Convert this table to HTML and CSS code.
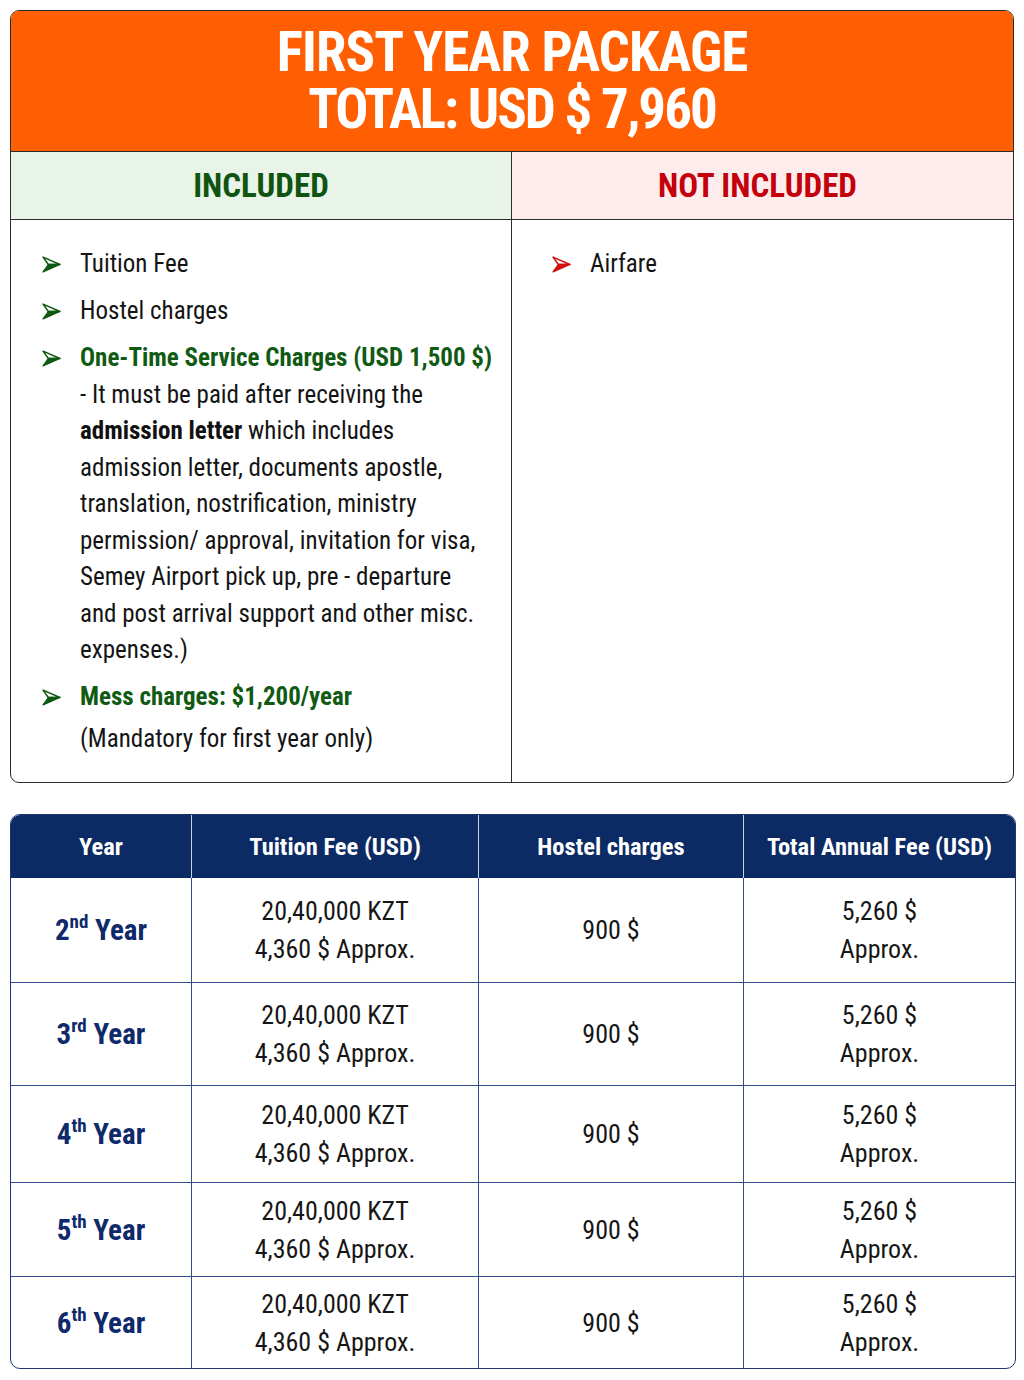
FILE: index.html
```html
<!DOCTYPE html>
<html lang="en">
<head>
<meta charset="utf-8">
<title>First Year Package</title>
<link rel="stylesheet" href="styles.css">
</head>
<body>
<div class="page">
  <section class="package">
    <header class="package-head">
      <h1>FIRST YEAR PACKAGE</h1>
      <h2>TOTAL: USD $ 7,960</h2>
    </header>
    <div class="cols">
      <div class="col-head inc">INCLUDED</div>
      <div class="col-head exc">NOT INCLUDED</div>
      <ul class="list inc-list">
        <li><svg class="arrow green" viewBox="0 0 18 16"><path d="M1 1 L17 8 L6 8 Z" fill="none" stroke="currentColor" stroke-width="1.4" stroke-linejoin="round"/><path d="M6 8 L17 8 L1 15 Z" fill="currentColor" stroke="currentColor" stroke-width="1.2" stroke-linejoin="round"/></svg><div class="txt">Tuition Fee</div></li>
        <li><svg class="arrow green" viewBox="0 0 18 16"><path d="M1 1 L17 8 L6 8 Z" fill="none" stroke="currentColor" stroke-width="1.4" stroke-linejoin="round"/><path d="M6 8 L17 8 L1 15 Z" fill="currentColor" stroke="currentColor" stroke-width="1.2" stroke-linejoin="round"/></svg><div class="txt">Hostel charges</div></li>
        <li><svg class="arrow green" viewBox="0 0 18 16"><path d="M1 1 L17 8 L6 8 Z" fill="none" stroke="currentColor" stroke-width="1.4" stroke-linejoin="round"/><path d="M6 8 L17 8 L1 15 Z" fill="currentColor" stroke="currentColor" stroke-width="1.2" stroke-linejoin="round"/></svg><div class="txt"><span class="hl">One-Time Service Charges (USD 1,500 $)</span><br>- It must be paid after receiving the<br><b>admission letter</b> which includes<br>admission letter, documents apostle,<br>translation, nostrification, ministry<br>permission/ approval, invitation for visa,<br>Semey Airport pick up, pre - departure<br>and post arrival support and other misc.<br>expenses.)</div></li>
        <li><svg class="arrow green" viewBox="0 0 18 16"><path d="M1 1 L17 8 L6 8 Z" fill="none" stroke="currentColor" stroke-width="1.4" stroke-linejoin="round"/><path d="M6 8 L17 8 L1 15 Z" fill="currentColor" stroke="currentColor" stroke-width="1.2" stroke-linejoin="round"/></svg><div class="txt"><span class="hl">Mess charges: $1,200/year</span><span class="note">(Mandatory for first year only)</span></div></li>
      </ul>
      <ul class="list exc-list">
        <li><svg class="arrow red" viewBox="0 0 18 16"><path d="M1 1 L17 8 L6 8 Z" fill="none" stroke="currentColor" stroke-width="1.4" stroke-linejoin="round"/><path d="M6 8 L17 8 L1 15 Z" fill="currentColor" stroke="currentColor" stroke-width="1.2" stroke-linejoin="round"/></svg><div class="txt">Airfare</div></li>
      </ul>
    </div>
  </section>

  <table class="fees">
    <colgroup>
      <col class="c1"><col class="c2"><col class="c3"><col class="c4">
    </colgroup>
    <thead>
      <tr><th>Year</th><th>Tuition Fee (USD)</th><th>Hostel charges</th><th>Total Annual Fee (USD)</th></tr>
    </thead>
    <tbody>
      <tr class="r1"><td class="yr">2<sup>nd</sup> Year</td><td>20,40,000 KZT<br>4,360 $ Approx.</td><td>900 $</td><td>5,260 $<br>Approx.</td></tr>
      <tr class="r2"><td class="yr">3<sup>rd</sup> Year</td><td>20,40,000 KZT<br>4,360 $ Approx.</td><td>900 $</td><td>5,260 $<br>Approx.</td></tr>
      <tr class="r3"><td class="yr">4<sup>th</sup> Year</td><td>20,40,000 KZT<br>4,360 $ Approx.</td><td>900 $</td><td>5,260 $<br>Approx.</td></tr>
      <tr class="r4"><td class="yr">5<sup>th</sup> Year</td><td>20,40,000 KZT<br>4,360 $ Approx.</td><td>900 $</td><td>5,260 $<br>Approx.</td></tr>
      <tr class="r5"><td class="yr">6<sup>th</sup> Year</td><td>20,40,000 KZT<br>4,360 $ Approx.</td><td>900 $</td><td>5,260 $<br>Approx.</td></tr>
    </tbody>
  </table>
</div>
</body>
</html>
```

FILE: styles.css
```css
* { box-sizing: border-box; }
html, body { margin: 0; padding: 0; background: #ffffff; }
body {
  font-family: "Roboto Condensed", "Liberation Sans Narrow", "Roboto", sans-serif;
  font-stretch: condensed;
  color: #141414;
  width: 1024px;
}
.page { padding: 10px 10px 0 10px; }

.package {
  border: 1.5px solid #2b2b2b;
  border-radius: 9px;
  overflow: hidden;
  background: #fff;
}
.package-head {
  background: #ff5e02;
  color: #fff;
  text-align: center;
  height: 140px;
  padding-top: 13px;
}
.package-head h1, .package-head h2 {
  margin: 0;
  font-weight: 700;
  font-size: 55px;
  line-height: 57px;
}
.package-head h1 { letter-spacing: -0.9px; }
.package-head h2 { letter-spacing: -2px; }
.cols {
  display: grid;
  grid-template-columns: 501px 1fr;
  grid-template-rows: 68px 562px;
  border-top: 1.5px solid #2b2b2b;
}
.col-head {
  display: flex;
  align-items: center;
  justify-content: center;
  font-weight: 700;
  font-size: 33px;
  border-bottom: 1.5px solid #2b2b2b;
}
.col-head.inc { background: #e7f4e7; color: #115411; border-right: 1.5px solid #2b2b2b; }
.col-head.exc { background: #fdeceb; color: #c4000c; padding-right: 10px; }

.list {
  list-style: none;
  margin: 0;
  font-size: 25px;
  line-height: 36.5px;
}
.inc-list { padding: 26px 0 0 31px; border-right: 1.5px solid #2b2b2b; }
.exc-list { padding: 26px 20px 0 40px; }
.list li {
  display: flex;
  align-items: flex-start;
  margin-bottom: 10.5px;
}
.arrow {
  width: 19px;
  height: 17px;
  flex: 0 0 19px;
  margin-top: 10px;
  margin-right: 19px;
}
.arrow.green { color: #0f5a12; }
.arrow.red { color: #d10f0f; }
.txt { flex: 1; white-space: nowrap; }
.hl { color: #115a14; font-weight: 700; }
.txt b { font-weight: 700; color: #111; }
.note { display: block; margin-top: 5px; }

.fees {
  margin-top: 31px;
  width: 1004px;
  border-collapse: separate;
  border-spacing: 0;
  border: 1.5px solid #1d3570;
  border-radius: 10px;
  overflow: hidden;
  table-layout: fixed;
  text-align: center;
}
.c1 { width: 181px; }
.c2 { width: 287px; }
.c3 { width: 265px; }
.c4 { width: 271px; }
.fees th {
  background: #0c2a64;
  color: #fff;
  font-weight: 700;
  font-size: 24.5px;
  height: 63px;
  border-right: 1.5px solid #c8d0e4;
  padding: 0;
}
.fees th:last-child, .fees td:last-child { border-right: none; }
.fees td {
  font-size: 26px;
  line-height: 38px;
  border-right: 1.5px solid #34498a;
  border-top: 1.5px solid #34498a;
  padding: 0;
  color: #161616;
}
.fees tbody tr:first-child td { border-top: none; }
.fees .yr { color: #0f2a6b; font-weight: 700; font-size: 29px; }
.fees sup { font-size: 19px; line-height: 0; vertical-align: 0; position: relative; top: -12px; }
.r1 td { height: 104px; }
.r2 td { height: 103px; }
.r3 td { height: 97px; }
.r4 td { height: 94px; }
.r5 td { height: 92px; }
```
